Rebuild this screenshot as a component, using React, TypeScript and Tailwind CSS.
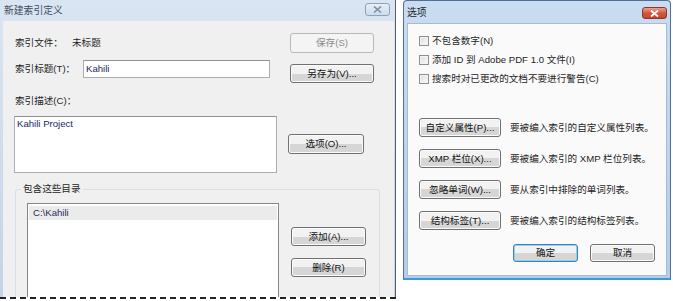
const FONT = { fontFamily: '"Liberation Sans", "Noto Sans CJK SC", sans-serif' };

function WinButton({ label, w, h = 19, disabled = false, isDefault = false }: { label: string; w: string; h?: number; disabled?: boolean; isDefault?: boolean }) {
  if (disabled) {
    return (
      <div className={`${w} h-[20px] shrink-0 flex items-center justify-center rounded-[3px] border border-[#b4b9bd] bg-[#f4f4f4] text-[#8a8a8a]`}>
        {label}
      </div>
    );
  }
  return (
    <div
      className={`${w} ${h === 20 ? 'h-[20px]' : h === 18 ? 'h-[18px]' : 'h-[19px]'} shrink-0 flex items-center justify-center rounded-[3px] border ${
        isDefault ? 'border-[#3c7fb1] shadow-[inset_0_0_0_1px_#8fd3f5]' : 'border-[#707070] shadow-[inset_0_0_0_1px_#fbfbfb]'
      } bg-gradient-to-b from-[#f2f2f2] from-50% to-[#d6d6d6] to-50% text-[#111]`}
    >
      {label}
    </div>
  );
}

function CloseButton({ active }: { active: boolean }) {
  return active ? (
    <div className="w-[25px] h-[12px] rounded-[3px] border border-[#8a3a2c] bg-gradient-to-b from-[#e9a392] via-[#d0583e] to-[#c8452c] flex items-center justify-center">
      <svg width="9" height="7" viewBox="0 0 9 7">
        <path d="M1 0.5 L8 6.5 M8 0.5 L1 6.5" stroke="#fff" strokeWidth="1.8" />
      </svg>
    </div>
  ) : (
    <div className="w-[25px] h-[13px] rounded-[3px] border border-[#8ea3bb] bg-gradient-to-b from-[#e6eef8] to-[#cfdcec] flex items-center justify-center">
      <svg width="9" height="7" viewBox="0 0 9 7">
        <path d="M1 0.5 L8 6.5 M8 0.5 L1 6.5" stroke="#7b8ea6" strokeWidth="1.6" />
      </svg>
    </div>
  );
}

function Checkbox({ label }: { label: string }) {
  return (
    <div className="flex items-center h-[15px]">
      <div className="w-[10px] h-[10px] border border-[#8e8f8f] bg-gradient-to-br from-[#dcdcdc] to-[#fbfbfb] shadow-[inset_0_0_0_1px_#f4f4f4]" />
      <span className="ml-[3px]">{label}</span>
    </div>
  );
}

function OptionRow({ btn, desc }: { btn: string; desc: string }) {
  return (
    <div className="flex items-center h-[19px]">
      <WinButton label={btn} w="w-[82px]" />
      <span className="ml-[9px]">{desc}</span>
    </div>
  );
}

export default function App() {
  return (
    <div className="w-[673px] h-[301px] bg-white flex overflow-hidden text-[9.6px] leading-[16px] text-[#1e1e1e]" style={FONT}>
      {/* 新建索引定义 (cut off at the bottom) */}
      <div className="w-[396px] h-[299px] shrink-0 flex flex-col">
        <div className="flex-1 min-h-0 flex flex-col bg-gradient-to-b from-[#d9e5f2] to-[#c3d4e8] border-r border-[#56606b] overflow-hidden">
          <div className="h-[21px] shrink-0 flex items-center pl-[4px] pr-[5px] text-[#3d4b5c] text-[9.8px]">
            <span>新建索引定义</span>
            <div className="ml-auto -mt-[2px]">
              <CloseButton active={false} />
            </div>
          </div>
          <div className="flex-1 min-h-0 ml-[3px] mr-[1px] bg-[#f0f0f0] pl-[12px] flex flex-col">
            <div className="mt-[12px] flex items-center h-[20px]">
              <span className="w-[57px]">索引文件：</span>
              <span className="w-[218px]">未标题</span>
              <WinButton label="保存(S)" w="w-[84px]" disabled />
            </div>
            <div className="mt-[7px] flex items-start">
              <span className="w-[68px] h-[18px] flex items-center">索引标题(T)：</span>
              <div className="w-[187px] h-[18px] border border-[#abadb3] border-t-[#8e9297] bg-white px-[2px] flex items-center text-[#1c2766]">
                Kahili
              </div>
              <div className="ml-[20px] mt-[4px]">
                <WinButton label="另存为(V)..." w="w-[84px]" />
              </div>
            </div>
            <div className="mt-[10px] h-[16px]">索引描述(C)：</div>
            <div className="mt-[7px] flex items-start">
              <div className="-ml-[1px] w-[263px] h-[57px] border border-[#abadb3] border-t-[#8e9297] bg-white px-[2px] text-[#1c2766] leading-[14px]">
                Kahili Project
              </div>
              <div className="ml-[11px] mt-[18px]">
                <WinButton label="选项(O)..." w="w-[76px]" h={20} />
              </div>
            </div>
            <fieldset className="mt-[8px] w-[365px] h-[160px] shrink-0 rounded-[3px] border border-[#d5dfe5]">
              <legend className="ml-[5px] px-[2px] h-[16px] leading-[16px]">包含这些目录</legend>
              <div className="flex items-start pt-[6px] pl-[11px]">
                <div className="w-[252px] h-[130px] border border-[#828790] bg-white pt-[2px] px-[1px]">
                  <div className="h-[14px] bg-[#ebebeb] pl-[4px] leading-[14px] text-[#2a2b55]">C:\Kahili</div>
                </div>
                <div className="ml-[12px] mt-[24px] flex flex-col gap-[12px]">
                  <WinButton label="添加(A)..." w="w-[75px]" />
                  <WinButton label="删除(R)" w="w-[75px]" />
                </div>
              </div>
            </fieldset>
          </div>
        </div>
        <div className="h-0 border-t-2 border-dashed border-[#222]" />
      </div>

      {/* 选项 */}
      <div className="ml-[7px] w-[268px] h-[280px] shrink-0 flex flex-col bg-gradient-to-b from-[#c9dcf2] to-[#b5cde8] border border-[#4f6f94] border-b-[2px] border-b-[#3b9ccf] rounded-t-[4px]">
        <div className="h-[22px] shrink-0 flex items-start pl-[3px] pr-[3px] pt-[4px]">
          <span className="text-[9.8px] leading-[16px] text-[#1e1e1e]">选项</span>
          <div className="ml-auto mt-[2px]">
            <CloseButton active />
          </div>
        </div>
        <div className="flex-1 mx-[3px] mb-[2px] bg-[#fafafa] border border-[#a7bbd3] pl-[11px] flex flex-col">
          <div className="mt-[9px] flex flex-col gap-[4px]">
            <Checkbox label="不包含数字(N)" />
            <Checkbox label="添加 ID 到 Adobe PDF 1.0 文件(I)" />
            <Checkbox label="搜索时对已更改的文档不要进行警告(C)" />
          </div>
          <div className="mt-[32px] flex flex-col gap-[12px]">
            <OptionRow btn="自定义属性(P)..." desc="要被编入索引的自定义属性列表。" />
            <OptionRow btn="XMP 栏位(X)..." desc="要被编入索引的 XMP 栏位列表。" />
            <OptionRow btn="忽略单词(W)..." desc="要从索引中排除的单词列表。" />
            <OptionRow btn="结构标签(T)..." desc="要被编入索引的结构标签列表。" />
          </div>
          <div className="mt-[14px] flex items-center">
            <div className="ml-[94px]">
              <WinButton label="确定" w="w-[65px]" h={18} isDefault />
            </div>
            <div className="ml-[12px]">
              <WinButton label="取消" w="w-[65px]" h={18} />
            </div>
          </div>
        </div>
      </div>
    </div>
  );
}
